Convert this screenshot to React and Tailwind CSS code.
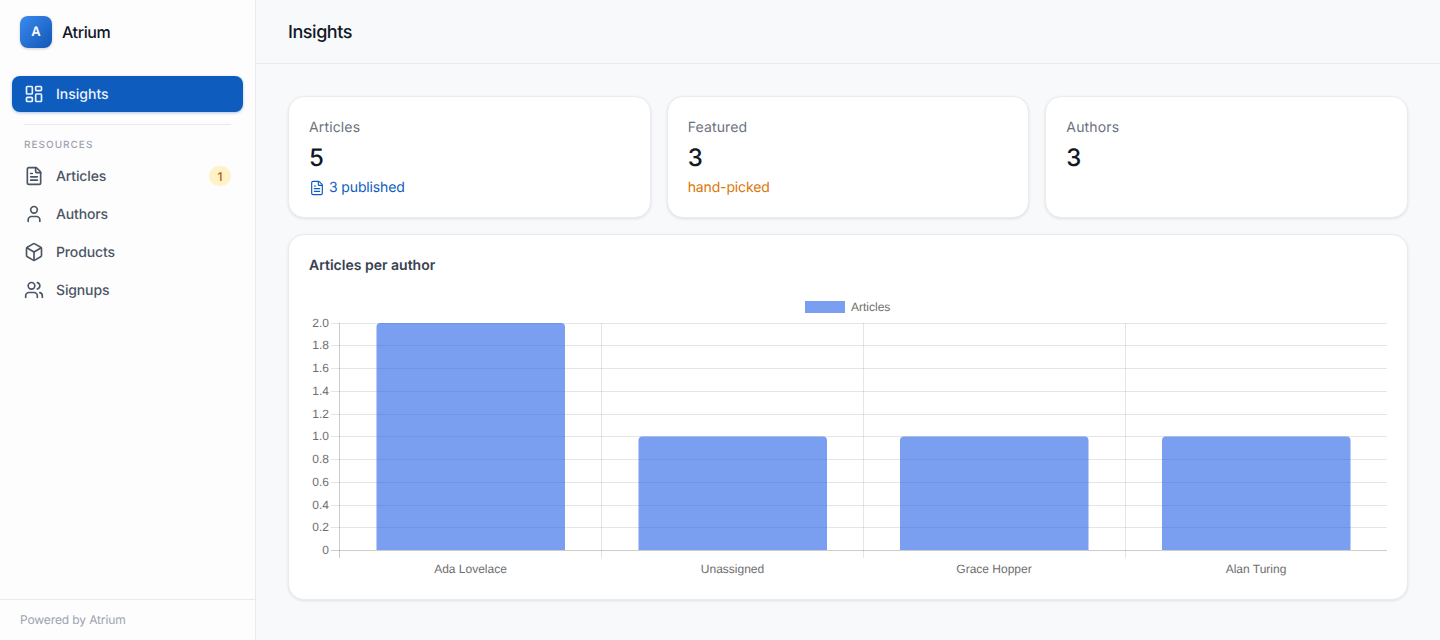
import React from "react";
import { LayoutDashboard, FileText, User, Box, Users } from "lucide-react";

const font = { fontFamily: "Inter, sans-serif" };

function NavItem({ icon: Icon, label, badge }) {
  return (
    <div className="flex h-[38px] items-center gap-3 rounded-lg px-3 text-sm font-medium tracking-[-0.01em] text-[#4b5563]">
      <Icon size={20} strokeWidth={2} className="shrink-0" />
      <span className="flex-1 pt-px">{label}</span>
      {badge && (
        <span className="flex h-5 w-[22px] items-center justify-center rounded-full bg-[#fef3c7] pt-px text-xs font-medium text-[#c2540a]">
          {badge}
        </span>
      )}
    </div>
  );
}

function StatCard({ label, value, children }) {
  return (
    <div className="h-[122px] flex-1 rounded-2xl border border-[#e9ebef] bg-white px-5 pt-[21px] shadow-[0_1px_3px_rgba(0,0,0,0.1)]">
      <div className="text-sm leading-5 tracking-[0.01em] text-[#6b7280]">{label}</div>
      <div className="mt-1 text-2xl leading-8 font-medium text-[#111827]">{value}</div>
      <div className="mt-1 flex h-5 items-center gap-1 text-sm tracking-[-0.01em]">{children}</div>
    </div>
  );
}

const yTicks = [
  ["2.0", 28],
  ["1.8", 50],
  ["1.6", 73],
  ["1.4", 96],
  ["1.2", 119],
  ["1.0", 141],
  ["0.8", 164],
  ["0.6", 187],
  ["0.4", 210],
  ["0.2", 232],
  ["0", 255],
];
const bars = [
  { name: "Ada Lovelace", x: 67.5, w: 188.5, y: 28, cx: 161.5 },
  { name: "Unassigned", x: 329.5, w: 188.5, y: 141.5, cx: 423.5 },
  { name: "Grace Hopper", x: 591, w: 188.5, y: 141.5, cx: 685 },
  { name: "Alan Turing", x: 853, w: 188.5, y: 141.5, cx: 947 },
];

function Chart() {
  const top = 28;
  const bottom = 255;
  const left = 30;
  const right = 1078;
  const textFont = "'Liberation Sans', Arial, sans-serif";
  const ink = "#6e6e6e";
  return (
    <svg width="1078" height="290" viewBox="0 0 1078 290" className="block">
      <rect x="496" y="6" width="40" height="12" fill="#7b9ff0" />
      <text x="542" y="16" fontSize="12" fill={ink} fontFamily={textFont}>Articles</text>
      {yTicks.map(([t, yy], i) => {
        const y = yy + 0.5;
        return (
          <g key={t}>
            <line x1={left - 8} x2={right} y1={y} y2={y} stroke={i === 10 ? "rgba(0,0,0,0.2)" : "rgba(0,0,0,0.1)"} />
            <text x={left - 10} y={y + 3} textAnchor="end" fontSize="12" fill={ink} fontFamily={textFont}>{t}</text>
          </g>
        );
      })}
      {[30, 292, 554, 816].map((x, i) => (
        <line key={x} x1={x + 0.5} x2={x + 0.5} y1={top} y2={bottom + 8} stroke={i === 0 ? "rgba(0,0,0,0.2)" : "rgba(0,0,0,0.1)"} />
      ))}
      {bars.map((b) => (
        <g key={b.name}>
          <path
            d={`M${b.x} ${bottom}V${b.y + 4}a4 4 0 0 1 4 -4H${b.x + b.w - 4}a4 4 0 0 1 4 4V${bottom}Z`}
            fill="rgba(35,95,230,0.6)"
          />
          <text x={b.cx} y="278" textAnchor="middle" fontSize="12" fill={ink} fontFamily={textFont}>{b.name}</text>
        </g>
      ))}
    </svg>
  );
}

export default function App() {
  return (
    <div style={font} className="flex h-[640px] w-[1440px] overflow-hidden bg-[#f8f9fb] [text-rendering:geometricPrecision]">
      <aside className="flex w-[256px] shrink-0 flex-col border-r border-[#e8eaee] bg-[#fdfdfe]">
        <div className="flex h-16 items-center gap-2.5 px-5">
          <div className="flex h-8 w-8 items-center justify-center rounded-lg bg-gradient-to-br from-[#3b8bf0] to-[#0e57b5] pt-px text-[13px] font-semibold text-white shadow-[0_1px_3px_rgba(0,0,0,0.2)]">
            A
          </div>
          <span className="text-base font-medium tracking-tight text-[#111827]">Atrium</span>
        </div>
        <nav className="flex-1 px-3 pt-3">
          <div className="flex h-9 items-center gap-3 rounded-lg bg-[#0e5cbd] px-3 text-sm font-medium text-[#eef4fc] shadow-[0_1px_3px_rgba(14,92,189,0.35)]">
            <LayoutDashboard size={20} strokeWidth={2} />
            <span className="pt-px">Insights</span>
          </div>
          <div className="mx-3 mt-3 border-t border-[#e8eaee]" />
          <div className="mt-[13px] px-3 text-[10px] leading-[14px] font-medium tracking-[0.1em] text-[#9ca3af]">
            RESOURCES
          </div>
          <div className="mt-[5px]">
            <NavItem icon={FileText} label="Articles" badge="1" />
            <NavItem icon={User} label="Authors" />
            <NavItem icon={Box} label="Products" />
            <NavItem icon={Users} label="Signups" />
          </div>
        </nav>
        <div className="flex h-[41px] items-center border-t border-[#e8eaee] px-5 text-xs tracking-[-0.01em] text-[#9ca3af]">
          Powered by Atrium
        </div>
      </aside>
      <main className="flex min-w-0 flex-1 flex-col">
        <header className="flex h-16 shrink-0 items-center border-b border-[#e8eaee] px-8 pt-[2px] text-lg font-medium tracking-tight text-[#111827]">
          Insights
        </header>
        <div className="flex flex-col gap-4 p-8">
          <div className="flex gap-4">
            <StatCard label="Articles" value="5">
              <FileText size={16} strokeWidth={1.75} className="text-[#0e5cbd]" />
              <span className="text-[#0e5cbd]">3 published</span>
            </StatCard>
            <StatCard label="Featured" value="3">
              <span className="text-[#d97706]">hand-picked</span>
            </StatCard>
            <StatCard label="Authors" value="3" />
          </div>
          <div className="h-[366px] rounded-2xl border border-[#e9ebef] bg-white px-5 pt-[21px] shadow-[0_1px_3px_rgba(0,0,0,0.1)]">
            <div className="text-sm leading-5 font-semibold text-[#374151]">Articles per author</div>
            <div className="mt-[19px]">
              <Chart />
            </div>
          </div>
        </div>
      </main>
    </div>
  );
}
